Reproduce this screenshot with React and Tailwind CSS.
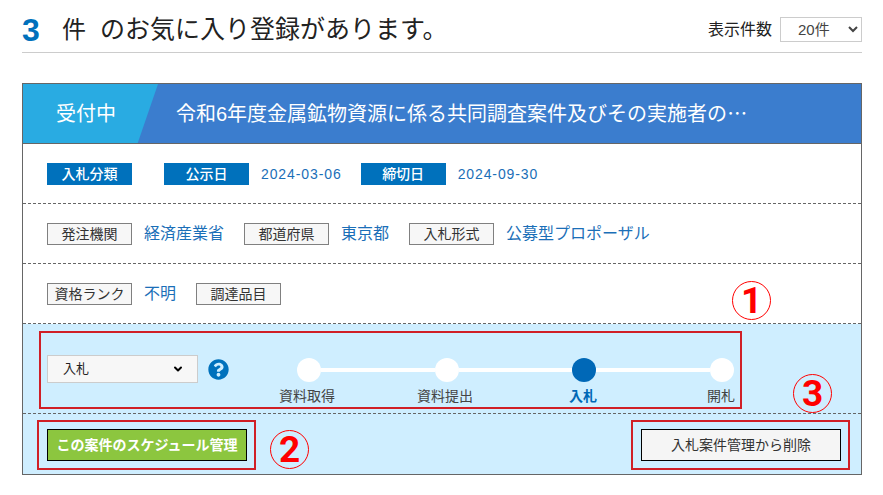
import React from "react";
import { FaQuestionCircle } from "react-icons/fa";
import { ChevronDown } from "lucide-react";

const BlueTag = ({ children }) => (
  <span className="flex h-[22px] w-[85px] items-center justify-center bg-[#0071bc] text-sm font-medium text-white">
    {children}
  </span>
);

const GrayTag = ({ children }) => (
  <span className="flex h-[22px] w-[85px] items-center justify-center border border-[#808080] bg-[#f7f7f7] text-sm whitespace-nowrap text-[#333]">
    {children}
  </span>
);

const Value = ({ children }) => (
  <span className="ml-3 mr-5 text-base text-[#1b6fb8]">{children}</span>
);

const DateText = ({ children }) => (
  <span className="ml-3 mr-[19px] text-sm tracking-[0.9px] text-[#1b6fb8]">{children}</span>
);

const Mark = ({ num, className }) => (
  <span
    className={
      "absolute flex h-[39px] w-[39px] items-center justify-center rounded-full border-[1.5px] border-[#f00] font-['Roboto'] text-[37px] leading-none font-bold text-[#f00] " +
      className
    }
  >
    {num}
  </span>
);

const Step = () => <span className="h-6 w-6 shrink-0 rounded-full bg-white" />;

const Stepper = () => (
  <div className="flex w-[470px] flex-col">
    <div className="ml-[18px] flex w-[437px] items-center">
      <Step />
      <span className="h-1 flex-1 bg-white" />
      <Step />
      <span className="h-1 flex-1 bg-white" />
      <span className="h-6 w-6 shrink-0 rounded-full bg-[#0068b7]" />
      <span className="h-1 flex-1 bg-white" />
      <Step />
    </div>
    <div className="mt-1 flex gap-[82px] text-sm leading-5 text-[#444]">
      <span className="w-14 text-center whitespace-nowrap">資料取得</span>
      <span className="w-14 text-center whitespace-nowrap">資料提出</span>
      <span className="w-14 text-center font-bold whitespace-nowrap text-[#0068b7]">入札</span>
      <span className="w-14 text-center whitespace-nowrap">開札</span>
    </div>
  </div>
);

export default function App() {
  return (
    <div className="relative h-[495px] w-[883px] overflow-hidden bg-white pl-[22px] font-['Liberation_Sans','Noto_Sans_CJK_JP',sans-serif] text-[#222]">
      <div className="flex h-[53px] w-[840px] items-center justify-between border-b border-[#ccc] pt-[7px]">
        <div className="flex items-center">
          <span className="w-10 text-[32px] leading-none font-bold text-[#0071bc]">3</span>
          <span className="text-2xl leading-none">件</span>
          <span className="ml-[14px] text-[25px] leading-none">のお気に入り登録があります。</span>
        </div>
        <div className="flex items-center">
          <span className="text-base">表示件数</span>
          <select className="ml-2 h-[25px] w-[82px] border border-[#ccc] pl-[13px] text-[15px] text-[#444]">
            <option>20件</option>
          </select>
        </div>
      </div>

      <div className="mt-[30px] w-[840px] border border-[#666]">
        <div className="flex h-[60px] items-center border-b border-[#666] bg-[#3b7dce]">
          <div className="flex h-full w-[135px] items-center bg-[#29abe2] pl-[33px] text-xl text-white [clip-path:polygon(0_0,100%_0,85%_100%,0_100%)]">
            受付中
          </div>
          <div className="ml-[18px] text-xl whitespace-nowrap text-white">
            令和6年度金属鉱物資源に係る共同調査案件及びその実施者の
            <span className="font-['Noto_Sans_CJK_JP']">…</span>
          </div>
        </div>

        <div className="flex h-[60px] items-center border-b border-dashed border-[#666] pl-6">
          <BlueTag>入札分類</BlueTag>
          <span className="w-8" />
          <BlueTag>公示日</BlueTag>
          <DateText>2024-03-06</DateText>
          <BlueTag>締切日</BlueTag>
          <DateText>2024-09-30</DateText>
        </div>

        <div className="flex h-[60px] items-center border-b border-dashed border-[#666] pl-6">
          <GrayTag>発注機関</GrayTag>
          <Value>経済産業省</Value>
          <GrayTag>都道府県</GrayTag>
          <Value>東京都</Value>
          <GrayTag>入札形式</GrayTag>
          <Value>公募型プロポーザル</Value>
        </div>

        <div className="flex h-[60px] items-center border-b border-dashed border-[#666] pl-6">
          <GrayTag>資格ランク</GrayTag>
          <Value>不明</Value>
          <GrayTag>調達品目</GrayTag>
        </div>

        <div className="bg-[#cfeeff]">
          <div className="flex h-[90px] items-start border-b border-dashed border-[#666] pt-[31px] pl-6">
            <div className="relative h-7 w-[151px]">
              <select className="h-7 w-full appearance-none border border-[#ccc] bg-[#f7f7f7] pl-[15px] text-[13px] text-[#222]">
                <option>入札</option>
              </select>
              <ChevronDown
                className="pointer-events-none absolute top-[8px] left-[125px] h-[12px] w-[12px] text-black"
                strokeWidth={4}
              />
            </div>
            <FaQuestionCircle className="mt-[4px] ml-[10px] h-[21px] w-[21px] text-[#0071bc]" />
            <div className="mt-[3px] ml-[50px]">
              <Stepper />
            </div>
          </div>
          <div className="flex h-[60px] items-start justify-between pt-[15px] pr-5 pl-6">
            <button className="h-8 w-[200px] border border-black bg-[#8cc63f] text-sm font-bold whitespace-nowrap text-white">
              この案件のスケジュール管理
            </button>
            <button className="h-8 w-[200px] border border-black bg-[#f5f5f5] text-sm whitespace-nowrap text-[#333]">
              入札案件管理から削除
            </button>
          </div>
        </div>
      </div>

      <span className="absolute top-[331px] left-[39px] h-[78px] w-[703px] border-2 border-[#d01f26]" />
      <span className="absolute top-[420px] left-[37px] h-[50px] w-[219px] border-2 border-[#d01f26]" />
      <span className="absolute top-[420px] left-[631px] h-[50px] w-[219px] border-2 border-[#d01f26]" />
      <Mark num="1" className="top-[281px] left-[732px]" />
      <Mark num="2" className="top-[430px] left-[270px]" />
      <Mark num="3" className="top-[374px] left-[793px]" />
    </div>
  );
}
